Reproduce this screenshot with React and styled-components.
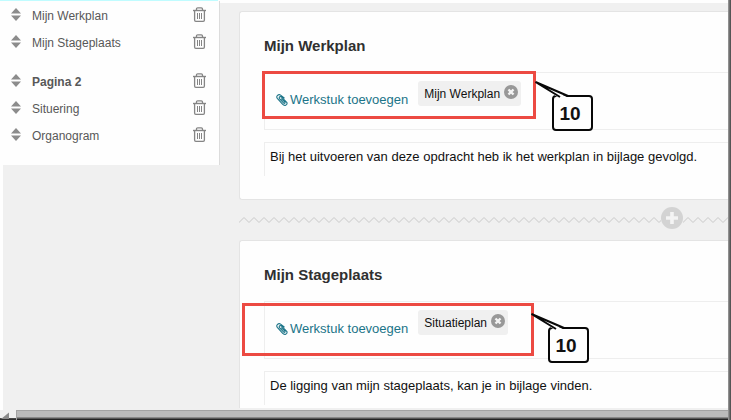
import React from 'react';
import styled, { createGlobalStyle } from 'styled-components';

const GlobalStyle = createGlobalStyle`
    * {
        box-sizing: border-box;
    }
    body {
        margin: 0;
        background: #fefefe;
        font-family: "Liberation Sans", Arial, sans-serif;
        font-size: 13px;
        color: #111;
    }
    button {
        border: 0;
        padding: 0;
        background: none;
        font: inherit;
        cursor: pointer;
    }
`;

const Window = styled.div`
    display: flex;
    min-height: 100vh;
    overflow: hidden;
`;

const Content = styled.div`
    flex: 1;
    min-width: 0;
    display: flex;
    flex-direction: column;
`;

const RightEdge = styled.div`
    width: 3px;
    background: linear-gradient(to right, #a0a0a0, #707070 50%, #484848);
`;

const Progress = styled.div`
    width: 218px;
    height: 1px;
    background: #c0fcff;
`;

const Workspace = styled.div`
    flex: 1;
    display: flex;
    align-items: flex-start;
    margin-left: 3px;
    background: #f0f0f0;
`;

const Sidebar = styled.nav`
    width: 217px;
    padding-bottom: 17px;
    background: #fefefe;
    border-right: 1px solid #dcdcdc;
`;

const PageList = styled.ul`
    list-style: none;
    margin: 0;
    padding: 0;

    & + & {
        margin-top: 12px;
    }
`;

const PageItem = styled.li`
    display: flex;
    align-items: center;
    height: 27px;
    padding: 0 13px 0 8px;
`;

const PageLink = styled.a`
    flex: 1;
    margin-left: 11px;
    padding-top: 2px;
    font-size: 12px;
    line-height: 16px;
    font-weight: ${props => props.$bold ? 'bold' : 'normal'};
    color: #585858;
    text-decoration: none;
`;

const IconButton = styled.button`
    display: flex;
`;

const Main = styled.main`
    flex: 1;
    min-width: 0;
    align-self: stretch;
    display: flex;
    flex-direction: column;
    padding: 8px 0 2px 19px;
    border-top: 2px solid #fefefe;
`;

const Card = styled.section`
    position: relative;
    flex-grow: ${props => props.$open ? 1 : 0};
    padding: 24px 0 ${props => props.$open ? 0 : 23}px 24px;
    background: #fefefe;
    border: 1px solid #e4e4e4;
    border-right: 0;
    border-bottom-width: ${props => props.$open ? 0 : 1}px;
    border-radius: 3px 0 0 ${props => props.$open ? 0 : 3}px;
`;

const CardTitle = styled.h2`
    margin: 0 0 16px;
    font-size: 15px;
    line-height: 20px;
    color: #303030;
`;

const Attachments = styled.div`
    display: flex;
    align-items: flex-start;
    height: 58px;
    padding: 8px 0 0 11px;
    border: 1px solid #eee;
    border-right: 0;
`;

const AddButton = styled.button`
    display: flex;
    align-items: center;
    gap: 2px;
    margin: 10px 10px 0 0;
    line-height: 18px;
    color: #1b7488;
    white-space: nowrap;
`;

const Chip = styled.span`
    display: flex;
    gap: 4px;
    height: 25px;
    padding: 4px 3px 0 6px;
    border-radius: 3px;
    background: #f0f0f0;
    font-size: 12px;
    line-height: 19px;
    white-space: nowrap;
`;

const TextField = styled.div`
    height: 34px;
    margin-top: 12px;
    padding: 5px;
    border: 1px solid #eee;
    border-width: 1px 0 0 1px;
    line-height: 18px;
    white-space: nowrap;
`;

const Divider = styled.div`
    display: flex;
    align-items: center;
    height: 40px;
    padding-bottom: 4px;
`;

const ZigzagLine = styled.svg`
    flex: ${props => props.$tail ? '0 0 45px' : '1 1 0'};
    min-width: 0;
    height: 6px;
    margin-top: 4px;
`;

// red frame around the step, lies over the card
const Highlight = styled.div`
    position: absolute;
    left: ${props => props.$box[0]}px;
    top: ${props => props.$box[1]}px;
    width: ${props => props.$box[2]}px;
    height: ${props => props.$box[3]}px;
    border: 3px solid #ec4a42;
    pointer-events: none;
`;

const Callout = styled.div`
    position: absolute;
    left: ${props => props.$at[0]}px;
    top: ${props => props.$at[1]}px;
    width: 41px;
    height: 36px;
    padding-right: 5px;
    border: 2px solid #080808;
    border-radius: 4px;
    background: #fefefe;
    font-size: 19px;
    font-weight: bold;
    line-height: 33px;
    text-align: center;
`;

const Pointer = styled.svg`
    position: absolute;
    left: -20px;
    top: -17px;
`;

const Scrollbar = styled.div`
    display: flex;
    height: 10px;
    background: linear-gradient(to bottom, transparent 8px, #555 8px, #222);
`;

const ScrollThumb = styled.div`
    flex: 1;
    border: solid #a2a2a2;
    border-width: 1px 0 0 1px;
    background: linear-gradient(to bottom, #bababa 6px, #888 6px, #888 7px, #555 7px, #555 8px, #222 8px);
`;

const Sorter = () => (
    <svg width="10" height="13" viewBox="0 0 10 13" fill="#8c8c8c">
        <path d="M5 0L10 5.500H0zM0 7.500h10L5 13z" />
    </svg>
);

const Trash = () => (
    <svg width="13" height="15" viewBox="0 0 13 15" fill="none" stroke="#858585">
        <path d="M0 3.500h13" strokeWidth="1.400" />
        <path d="M3.500 3.200V2Q3.500 .8 4.700 .8h3.600Q9.500 .8 9.500 2v1.200" strokeWidth="1.300" />
        <path d="M1.600 4v9q0 1.300 1.200 1.300h7.400q1.200 0 1.200-1.300V4" strokeWidth="1.300" />
        <path d="M4.500 6v6M6.500 6v6M8.500 6v6" strokeWidth="1" />
    </svg>
);

const Paperclip = () => (
    <svg width="12" height="12" viewBox="0 0 12 12" fill="none" stroke="#1b7488" strokeLinecap="round">
        <path d="M8.200 4L4.600 1.100C2.400-.3-.3 2.200 1.300 4.400l5.200 5.800c1.800 2 5.300 1.200 4.400-1.700L5.600 3.100C4.400 2 2.500 3 3.500 4.600l4.200 4.500c1 .7 1.700-.1 1.200-.9L5.500 4.900" strokeWidth="1.100" />
    </svg>
);

const Close = () => (
    <svg width="14" height="14" viewBox="0 0 14 14">
        <circle cx="7" cy="7" r="7" fill="#989898" />
        <path d="M4.500 4.500l5 5M9.500 4.500l-5 5" stroke="#f4f4f4" strokeWidth="2.400" />
    </svg>
);

const Plus = () => (
    <svg width="22" height="22" viewBox="0 0 22 22">
        <circle cx="11" cy="11" r="11" fill="#d3d3d3" />
        <path d="M11 5v12M5 11h12" stroke="#f4f4f4" strokeWidth="3.600" />
    </svg>
);

const Zigzag = ({ id, tail }) => (
    <ZigzagLine $tail={tail} aria-hidden="true">
        <defs>
            <pattern id={id} width="10" height="6" patternUnits="userSpaceOnUse">
                <path d="M-1 4.500L0 5.500L5 .5L10 5.500L11 4.500" fill="none" stroke="#c8c8c8" />
            </pattern>
        </defs>
        <rect width="100%" height="6" fill={`url(#${id})`} />
    </ZigzagLine>
);

const Page = ({ name, bold }) => (
    <PageItem>
        <Sorter />
        <PageLink href="#" $bold={bold}>{name}</PageLink>
        <IconButton aria-label={'Verwijder ' + name}><Trash /></IconButton>
    </PageItem>
);

const Block = ({ title, file, text, open, highlight, callout }) => (
    <Card $open={open}>
        <CardTitle>{title}</CardTitle>
        <Attachments>
            <AddButton><Paperclip />Werkstuk toevoegen</AddButton>
            <Chip>
                {file}
                <IconButton aria-label={'Verwijder ' + file}><Close /></IconButton>
            </Chip>
        </Attachments>
        <TextField>{text}</TextField>
        <Highlight $box={highlight} />
        <Callout $at={callout}>
            10
            <Pointer width="40" height="20" viewBox="0 0 40 20">
                <path d="M24 17.500L1.500 2L34 17.500z" fill="#fefefe" />
                <path d="M26 17L1.500 2L34 16" fill="none" stroke="#080808" strokeWidth="2" />
            </Pointer>
        </Callout>
    </Card>
);

const App = () => (
    <Window>
        <GlobalStyle />
        <Content>
            <Progress />
            <Workspace>
                <Sidebar>
                    <PageList>
                        <Page name="Mijn Werkplan" />
                        <Page name="Mijn Stageplaats" />
                    </PageList>
                    <PageList>
                        <Page name="Pagina 2" bold />
                        <Page name="Situering" />
                        <Page name="Organogram" />
                    </PageList>
                </Sidebar>
                <Main>
                    <Block
                        title="Mijn Werkplan"
                        file="Mijn Werkplan"
                        text="Bij het uitvoeren van deze opdracht heb ik het werkplan in bijlage gevolgd."
                        highlight={[22, 59, 274, 48]}
                        callout={[312, 83]}
                    />
                    <Divider>
                        <Zigzag id="zigzag-left" />
                        <IconButton aria-label="Blok toevoegen"><Plus /></IconButton>
                        <Zigzag id="zigzag-right" tail />
                    </Divider>
                    <Block
                        open
                        title="Mijn Stageplaats"
                        file="Situatieplan"
                        text="De ligging van mijn stageplaats, kan je in bijlage vinden."
                        highlight={[2, 62, 292, 53]}
                        callout={[308, 86]}
                    />
                </Main>
            </Workspace>
            <Scrollbar>
                <svg width="16" height="10" viewBox="0 0 16 10">
                    <rect width="16" height="8" fill="#f0f0f0" />
                    <path d="M1 9L9 2.500V9z" fill="#8a8a8a" />
                </svg>
                <ScrollThumb />
            </Scrollbar>
        </Content>
        <RightEdge />
    </Window>
);

export default App;
